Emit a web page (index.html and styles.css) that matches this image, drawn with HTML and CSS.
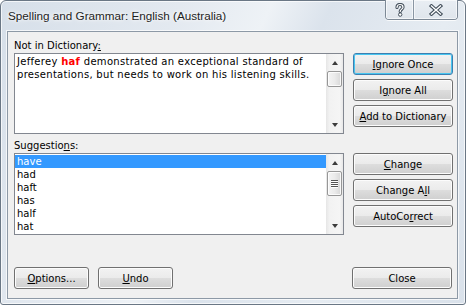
FILE: index.html
```html
<!DOCTYPE html>
<html>
<head>
    <title>Spelling and Grammar</title>
    <link rel="stylesheet" href="styles.css">
</head>
<body>
    <div class="window">
        <div class="titlebar">
            <span class="title">Spelling and Grammar: English (Australia)</span>
            <div class="caption">
                <span class="cap help">
                    <svg width="12" height="14" viewBox="0 0 12 14">
                        <path d="M3 4.5 C3 2.5 4.5 1.5 6 1.5 C7.8 1.5 9 2.6 9 4.2 C9 6 6.2 6.4 6.2 8.6" fill="none" stroke="#44505c" stroke-width="3.2" stroke-linecap="round"/>
                        <path d="M3 4.5 C3 2.5 4.5 1.5 6 1.5 C7.8 1.5 9 2.6 9 4.2 C9 6 6.2 6.4 6.2 8.6" fill="none" stroke="#fff" stroke-width="1.2" stroke-linecap="round"/>
                        <circle cx="6.2" cy="11.6" r="1.7" fill="#fff" stroke="#44505c" stroke-width="1"/>
                    </svg>
                </span>
                <span class="cap close">
                    <svg width="14" height="12" viewBox="0 0 14 12">
                        <path d="M2.5 2 L11.5 10 M11.5 2 L2.5 10" stroke="#44505c" stroke-width="3.6" stroke-linecap="square"/>
                        <path d="M2.5 2 L11.5 10 M11.5 2 L2.5 10" stroke="#fff" stroke-width="1.4" stroke-linecap="square"/>
                    </svg>
                </span>
            </div>
        </div>

        <div class="client">
            <div class="section">
                <div class="field">
                    <div class="label">Not in Dictionary<u>:</u></div>
                    <div class="box textbox">
                        <div class="box-text">Jefferey <span class="err">haf</span> demonstrated an exceptional standard of presentations, but needs to work on his listening skills.</div>
                        <div class="vscroll">
                            <div class="arrow"><span class="up"></span></div>
                            <div class="thumb small"></div>
                            <div class="track"></div>
                            <div class="arrow"><span class="down"></span></div>
                        </div>
                    </div>
                </div>
                <div class="buttons">
                    <button class="btn default"><u>I</u>gnore Once</button>
                    <button class="btn">I<u>g</u>nore All</button>
                    <button class="btn"><u>A</u>dd to Dictionary</button>
                </div>
            </div>

            <div class="section second">
                <div class="field">
                    <div class="label">Suggestio<u>n</u>s:</div>
                    <div class="box listbox">
                        <ul class="items">
                            <li class="selected">have</li>
                            <li>had</li>
                            <li>haft</li>
                            <li>has</li>
                            <li>half</li>
                            <li>hat</li>
                        </ul>
                        <div class="vscroll">
                            <div class="arrow"><span class="up"></span></div>
                            <div class="thumb big"><i></i><i></i><i></i><i></i></div>
                            <div class="track"></div>
                            <div class="arrow"><span class="down"></span></div>
                        </div>
                    </div>
                </div>
                <div class="buttons">
                    <button class="btn"><u>C</u>hange</button>
                    <button class="btn">Change A<u>l</u>l</button>
                    <button class="btn">AutoCo<u>r</u>rect</button>
                </div>
            </div>

            <div class="footer">
                <button class="btn small-btn"><u>O</u>ptions...</button>
                <button class="btn small-btn"><u>U</u>ndo</button>
                <button class="btn close-btn">Close</button>
            </div>
        </div>
    </div>
</body>
</html>
```

FILE: styles.css
```css
body {
    margin: 0;
    width: 466px;
    height: 305px;
    overflow: hidden;
    font-family: "DejaVu Sans", sans-serif;
    font-size: 10px;
    background: #fff;
}
.window {
    width: 466px;
    height: 305px;
    box-sizing: border-box;
    border: 1px solid #6a7785;
    border-radius: 6px 6px 3px 3px;
    box-shadow: inset 0 0 0 1px rgba(255,255,255,0.7);
    background: linear-gradient(115deg, #d6dfe9 0%, #e3e9f0 30%, #eef2f6 45%, #dbe3ec 55%, #e6ecf2 75%, #d9e1ea 100%);
    display: flex;
    flex-direction: column;
}
.titlebar {
    height: 30px;
    display: flex;
    align-items: flex-start;
}
.title {
    font-family: "Liberation Sans", sans-serif;
    font-size: 11.7px;
    color: #1e1e1e;
    line-height: 30px;
    padding-left: 7px;
    text-shadow: 0 0 6px #fff, 0 0 3px #fff;
}
.caption {
    margin-left: auto;
    margin-right: 7px;
    display: flex;
    height: 19px;
    margin-top: -1px;
    border: 1px solid #7d8996;
    border-top: none;
    border-radius: 0 0 4px 4px;
    overflow: hidden;
    box-shadow: 0 1px 0 rgba(255,255,255,0.8);
}
.cap {
    display: flex;
    align-items: center;
    justify-content: center;
    background: linear-gradient(#e9eef3, #dfe5ec);
    box-shadow: inset 0 0 0 1px rgba(255,255,255,0.6);
}
.help {
    width: 27px;
    border-right: 1px solid #8a96a3;
}
.close {
    width: 43px;
}
.client {
    flex: 1;
    margin: 0 7px 5px 6px;
    border: 1px solid #8d99a6;
    box-shadow: 0 0 0 1px rgba(255,255,255,0.7);
    background: #f0f0f0;
    padding: 7px 4px 9px 6px;
    display: flex;
    flex-direction: column;
}
.section {
    display: flex;
    gap: 9px;
}
.second {
    margin-top: 5px;
}
.field {
    width: 330px;
}
.label {
    line-height: 14px;
    height: 14px;
    color: #000;
}
.box {
    border: 1px solid #828790;
    background: #fff;
    display: flex;
}
.textbox {
    height: 79px;
}
.box-text {
    flex: 1;
    padding: 1px 2px;
    line-height: 13px;
    letter-spacing: 0.3px;
    color: #000;
}
.err {
    color: #f00;
    font-weight: bold;
}
.listbox {
    height: 80px;
}
.items {
    list-style: none;
    margin: 0;
    padding: 1px 0 0 0;
    flex: 1;
}
.items li {
    height: 13px;
    line-height: 13px;
    padding-left: 2px;
    color: #000;
}
.items li.selected {
    background: #3399ff;
    color: #fff;
}
.vscroll {
    width: 17px;
    display: flex;
    flex-direction: column;
    background: linear-gradient(to right, #e6e6e6, #f2f2f2 20%, #f5f5f5 80%, #e8e8e8);
}
.arrow {
    height: 17px;
    display: flex;
    align-items: center;
    justify-content: center;
}
.up, .down {
    width: 0;
    height: 0;
    border-left: 3.5px solid transparent;
    border-right: 3.5px solid transparent;
}
.up {
    border-bottom: 4px solid #3d3d3d;
}
.down {
    border-top: 4px solid #3d3d3d;
}
.thumb {
    margin: 0 1px;
    border: 1px solid #979797;
    border-radius: 2px;
    background: linear-gradient(to right, #f4f4f4, #ebebeb 50%, #d8d8d8);
    box-shadow: inset 0 0 0 1px rgba(255,255,255,0.8);
}
.thumb.small {
    height: 14px;
}
.thumb.big {
    height: 23px;
    display: flex;
    flex-direction: column;
    align-items: center;
    justify-content: center;
    gap: 1px;
}
.thumb.big i {
    width: 7px;
    height: 1px;
    background: #555;
    box-shadow: 0 1px 0 #fff;
}
.track {
    flex: 1;
}
.buttons {
    margin-top: 14px;
    display: flex;
    flex-direction: column;
    gap: 4px;
}
.btn {
    width: 100px;
    height: 22px;
    padding: 0;
    font-family: "DejaVu Sans", sans-serif;
    font-size: 10px;
    color: #000;
    border: 1px solid #707070;
    border-radius: 3px;
    background: linear-gradient(#f2f2f2 0%, #ebebeb 48%, #dddddd 52%, #cfcfcf 100%);
    box-shadow: inset 0 0 0 1px #fcfcfc;
}
.btn.default {
    border-color: #3c7fb1;
    box-shadow: inset 0 0 0 1px #48c6f0;
}
.footer {
    margin-top: auto;
    display: flex;
    gap: 9px;
}
.small-btn {
    width: 75px;
}
.close-btn {
    margin-left: auto;
    margin-right: 1px;
}
```
